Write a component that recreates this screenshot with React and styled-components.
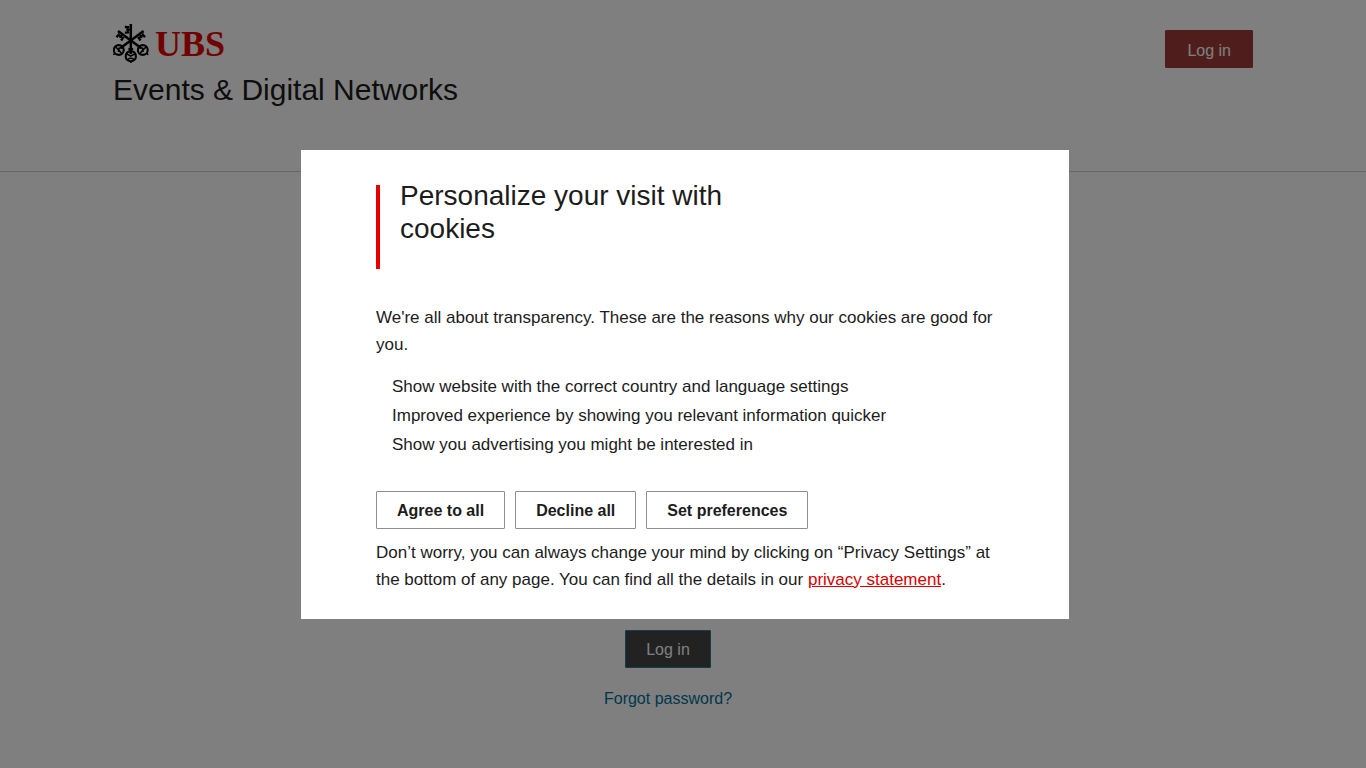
import React, { useState } from 'react';
import styled, { createGlobalStyle, css } from 'styled-components';

const GlobalStyle = createGlobalStyle`
  * { box-sizing: border-box; }
  body {
    margin: 0;
    background: #fff;
    color: #1c1c1c;
    font-family: 'Liberation Sans', Arial, sans-serif;
    font-size: 16px;
  }
`;

// --- Page ---
const Header = styled.header`
  border-bottom: 1px solid #ccc;
`;

const HeaderInner = styled.div`
  display: flex;
  justify-content: space-between;
  align-items: flex-start;
  max-width: 1140px;
  min-height: 171px;
  margin: 0 auto;
  padding-top: 24px;
`;

const Logo = styled.a`
  display: flex;
  align-items: center;
  gap: 6px;
  height: 40px;
  color: #e60000;
  font: bold 36px/38px 'Liberation Serif', serif;
  text-decoration: none;
`;

const SiteTitle = styled.h1`
  margin: 8px 0 0;
  font-size: 30px;
  font-weight: 400;
  line-height: 36px;
`;

const Button = styled.button`
  height: 38px;
  padding: 2px 20px 0;
  border: 1px solid #8e8e8e;
  border-radius: 1px;
  background: #fff;
  color: #1c1c1c;
  font: bold 16px/34px 'Liberation Sans', Arial, sans-serif;
  cursor: pointer;

  ${(props) => props.$variant === 'red' && css`
    margin-top: 6px;
    padding: 4px 21px 0;
    border-color: #9f3d39;
    background: #9f3d39;
    color: #fff;
    font-weight: 400;
    line-height: 32px;
  `}

  ${(props) => props.$variant === 'dark' && css`
    border-color: #2a7a99;
    background: #444;
    color: #fff;
    font-weight: 400;
  `}
`;

const LoginArea = styled.main`
  display: flex;
  flex-direction: column;
  align-items: center;
  gap: 20px;
  padding: 458px 30px 40px 0;
`;

const ForgotLink = styled.a`
  color: #007099;
  line-height: 22px;
  text-decoration: none;
`;

// --- Cookie dialog ---
const Overlay = styled.div`
  position: fixed;
  inset: 0;
  display: flex;
  align-items: center;
  justify-content: center;
  padding-left: 4px;
  background: rgba(0, 0, 0, 0.5);
`;

const Dialog = styled.section`
  width: 100%;
  max-width: 768px;
  padding: 29px 75px 26px;
  background: #fff;
`;

const DialogHead = styled.div`
  display: flex;
  gap: 20px;
  margin-bottom: 35px;

  &::before {
    content: '';
    flex: none;
    width: 4px;
    height: 84px;
    margin-top: 6px;
    background: #e60000;
  }
`;

const DialogTitle = styled.h2`
  max-width: 400px;
  margin: 0;
  font-size: 28px;
  font-weight: 400;
  line-height: 33px;
`;

const Text = styled.p`
  margin: 0;
  font-size: 17px;
  line-height: 27px;
`;

const Reasons = styled.ul`
  margin: 14px 0 32px;
  padding-left: 16px;
  list-style: none;
  font-size: 17px;
  line-height: 29px;
`;

const Actions = styled.div`
  display: flex;
  flex-wrap: wrap;
  gap: 10px;
  margin-bottom: 10px;
`;

const PrivacyLink = styled.a`
  color: #da0000;
  text-decoration: underline;
`;

const REASONS = [
  'Show website with the correct country and language settings',
  'Improved experience by showing you relevant information quicker',
  'Show you advertising you might be interested in',
];

// teeth of a key whose shaft runs straight down from 0,0
function Teeth() {
  return (
    <path d="M-3 2.4v6.8M-1 5.8h-3.6M-1.6 3h-3.4M-1.6 8.6h-3.4M-5 1.8v2.4M-5 7.4v2.4" strokeWidth="1.9" />
  );
}

function SideKey() {
  return (
    <>
      <path d="M5 7 28 24" strokeWidth="2.5" />
      <g transform="translate(4.8 6.6) rotate(-53)">
        <Teeth />
      </g>
      <circle cx="29.8" cy="26" r="4.9" strokeWidth="2.1" />
      <path d="M25.5 23.5l4 .8.8 3.6M30 25.8l3-2.8M29.8 26l-2.6 3.2M33.8 29.6l1.6 1" strokeWidth="1.6" />
    </>
  );
}

function Keys() {
  return (
    <svg width="36" height="40" viewBox="0 0 36 40" fill="none" stroke="#000" aria-hidden="true">
      <SideKey />
      <g transform="matrix(-1 0 0 1 35.6 0)">
        <SideKey />
      </g>
      <path d="M17.8 0v30" strokeWidth="2.5" />
      <g transform="translate(17.8 0)">
        <Teeth />
      </g>
      <circle cx="17.8" cy="32.2" r="5.1" strokeWidth="2.1" />
      <path d="M13.6 29.8l4.2 2.4 4.2-2.4M14.8 35.4q3-2.4 6 0M17.8 37v2" strokeWidth="1.6" />
      <path d="M15.4 25h4.8" strokeWidth="2.2" />
    </svg>
  );
}

export default function App() {
  const [open, setOpen] = useState(true);
  const close = () => setOpen(false);

  return (
    <>
      <GlobalStyle />
      <Header>
        <HeaderInner>
          <div>
            <Logo href="#home">
              <Keys />
              UBS
            </Logo>
            <SiteTitle>Events &amp; Digital Networks</SiteTitle>
          </div>
          <Button type="button" $variant="red">Log in</Button>
        </HeaderInner>
      </Header>

      <LoginArea>
        <Button type="button" $variant="dark">Log in</Button>
        <ForgotLink href="#forgot">Forgot password?</ForgotLink>
      </LoginArea>

      {open && (
        <Overlay>
          <Dialog role="dialog" aria-modal="true" aria-labelledby="cookie-title">
            <DialogHead>
              <DialogTitle id="cookie-title">Personalize your visit with cookies</DialogTitle>
            </DialogHead>
            <Text>We're all about transparency. These are the reasons why our cookies are good for you.</Text>
            <Reasons>
              {REASONS.map((reason) => <li key={reason}>{reason}</li>)}
            </Reasons>
            <Actions>
              <Button type="button" onClick={close}>Agree to all</Button>
              <Button type="button" onClick={close}>Decline all</Button>
              <Button type="button">Set preferences</Button>
            </Actions>
            <Text>
              Don’t worry, you can always change your mind by clicking on “Privacy Settings” at the bottom
              of any page. You can find all the details in our{' '}
              <PrivacyLink href="#privacy">privacy statement</PrivacyLink>.
            </Text>
          </Dialog>
        </Overlay>
      )}
    </>
  );
}
